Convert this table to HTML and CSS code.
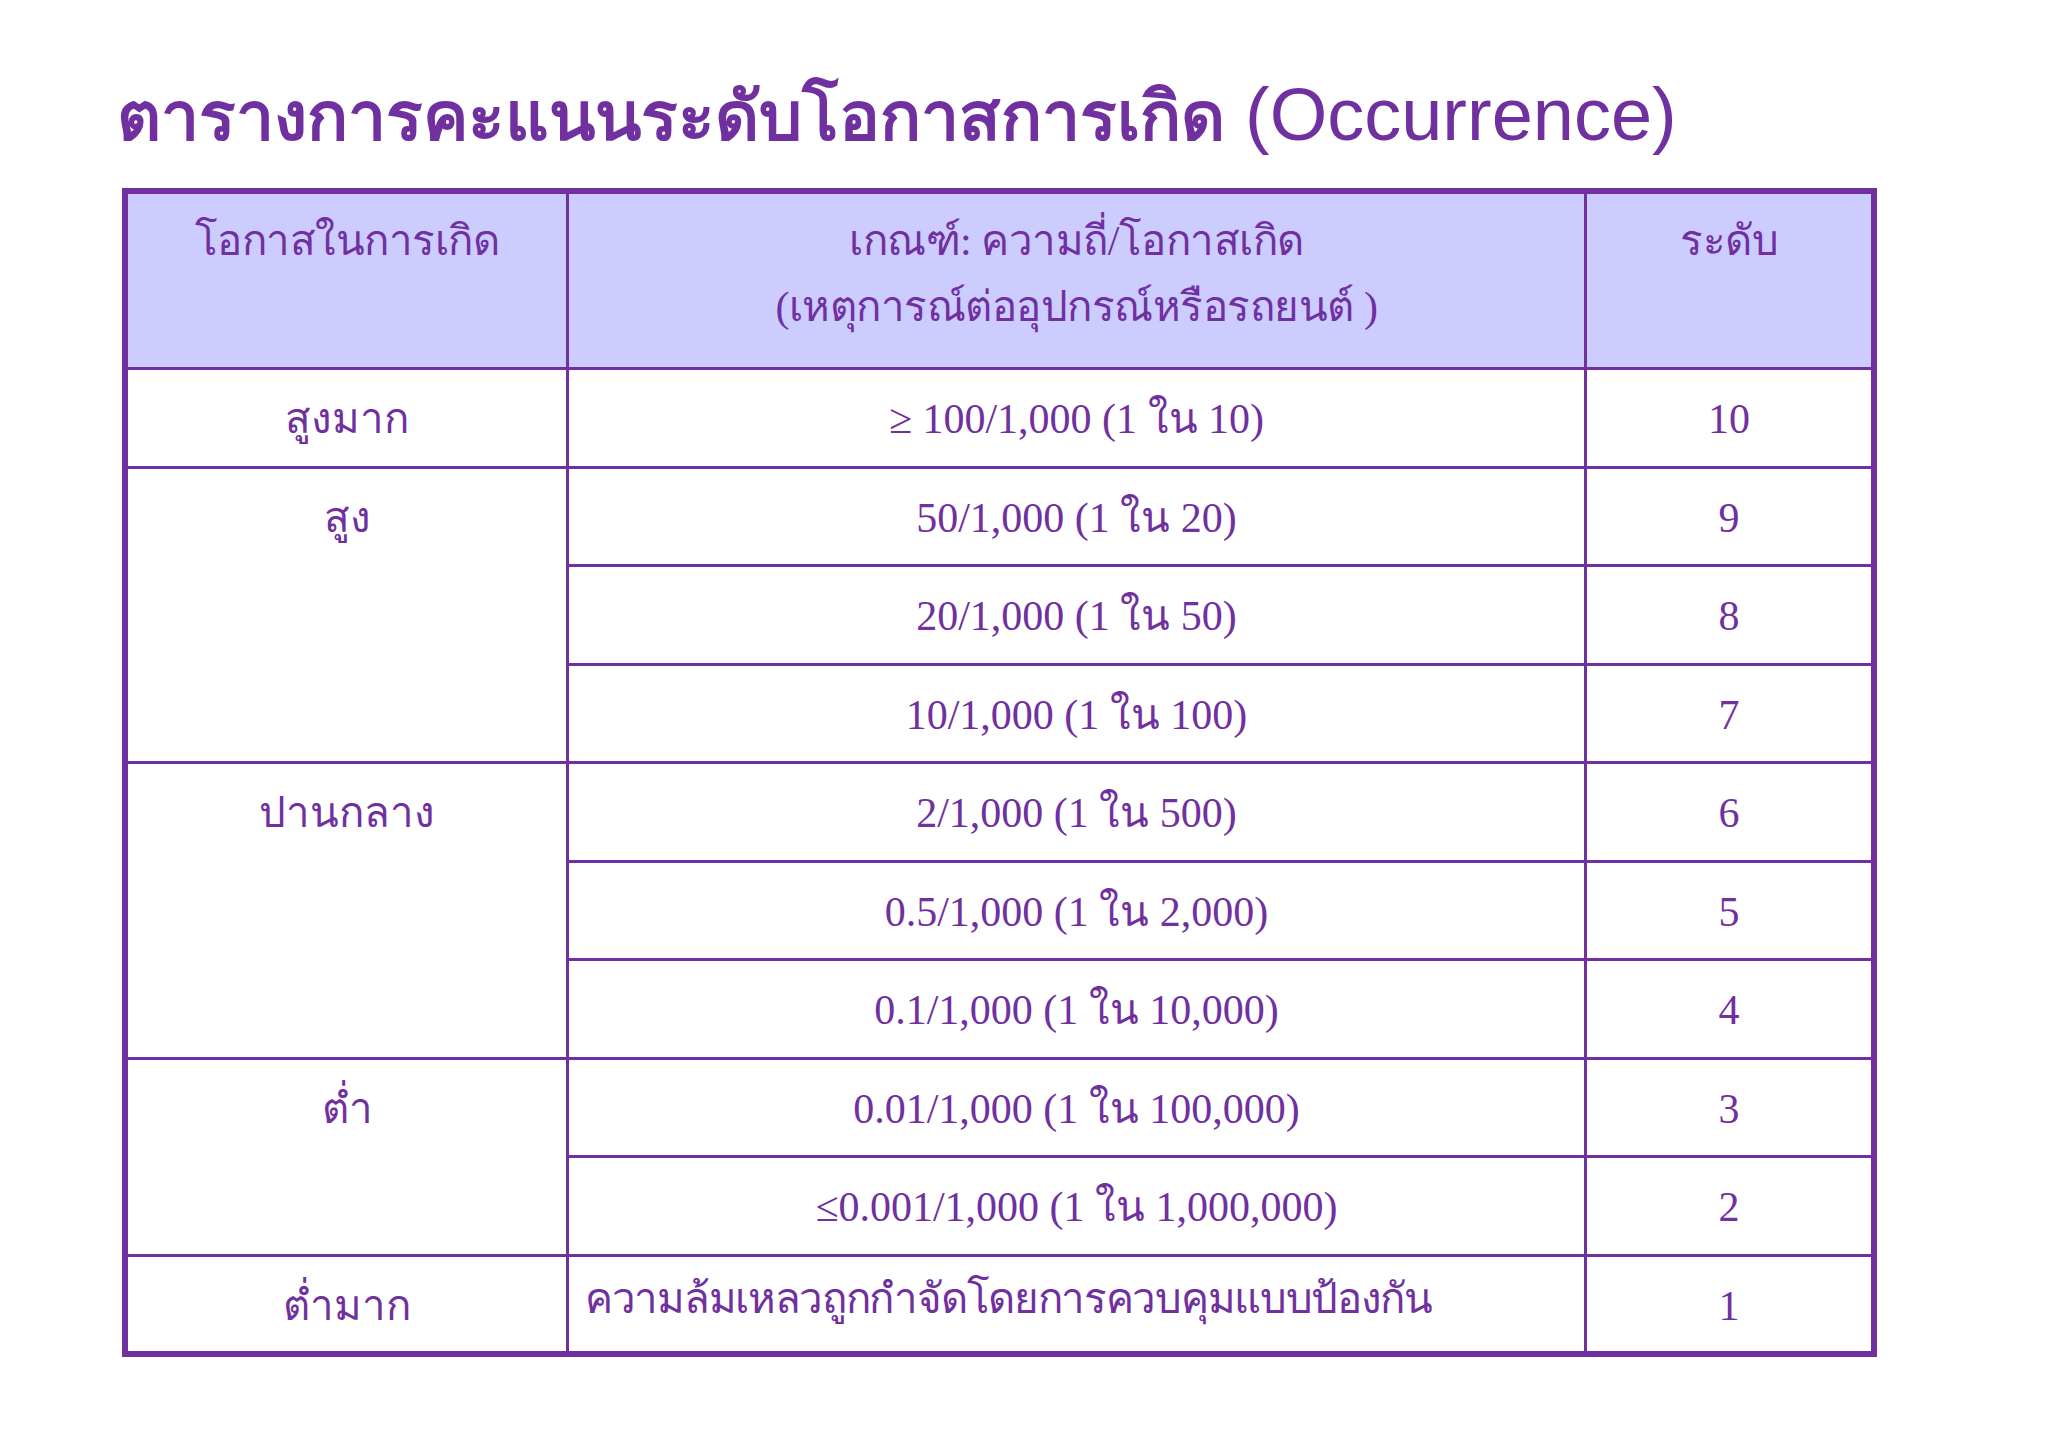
FILE: index.html
```html
<!DOCTYPE html>
<html lang="th">
<head>
<meta charset="utf-8">
<title>ตารางการคะแนนระดับโอกาสการเกิด (Occurrence)</title>
<link rel="stylesheet" href="styles.css">
</head>
<body>
<main class="slide">
  <h1 class="title"><span class="title-th">ตารางการคะแนนระดับโอกาสการเกิด</span> <span class="title-en">(Occurrence)</span></h1>
  <table class="grid">
    <colgroup>
      <col class="col-level">
      <col class="col-crit">
      <col class="col-num">
    </colgroup>
    <thead>
      <tr class="head">
        <th>โอกาสในการเกิด</th>
        <th>เกณฑ์: ความถี่/โอกาสเกิด<br>(เหตุการณ์ต่ออุปกรณ์หรือรถยนต์ )</th>
        <th>ระดับ</th>
      </tr>
    </thead>
    <tbody>
      <tr><td>สูงมาก</td><td>≥ 100/1,000 (1 ใน 10)</td><td>10</td></tr>
      <tr><td rowspan="3">สูง</td><td>50/1,000 (1 ใน 20)</td><td>9</td></tr>
      <tr><td>20/1,000 (1 ใน 50)</td><td>8</td></tr>
      <tr><td>10/1,000 (1 ใน 100)</td><td>7</td></tr>
      <tr><td rowspan="3">ปานกลาง</td><td>2/1,000 (1 ใน 500)</td><td>6</td></tr>
      <tr><td>0.5/1,000 (1 ใน 2,000)</td><td>5</td></tr>
      <tr><td>0.1/1,000 (1 ใน 10,000)</td><td>4</td></tr>
      <tr><td rowspan="2">ต่ำ</td><td>0.01/1,000 (1 ใน 100,000)</td><td>3</td></tr>
      <tr><td>≤0.001/1,000 (1 ใน 1,000,000)</td><td>2</td></tr>
      <tr class="last-row"><td>ต่ำมาก</td><td class="text-left">ความล้มเหลวถูกกำจัดโดยการควบคุมแบบป้องกัน</td><td>1</td></tr>
    </tbody>
  </table>
</main>
</body>
</html>
```

FILE: styles.css
```css
html, body {
  margin: 0;
  padding: 0;
  background: #ffffff;
}

.slide {
  width: 2048px;
  height: 1448px;
  padding: 79px 0 0 117px;
  box-sizing: border-box;
  color: #7030a0;
}

.title {
  margin: 0;
  font-family: "Liberation Sans", "DejaVu Sans", sans-serif;
  font-weight: normal;
  font-size: 72px;
  line-height: 72px;
  height: 109px;
  white-space: nowrap;
}

.title-th {
  font-size: 68px;
  font-weight: bold;
}

.title-en {
  font-size: 74px;
}

.grid {
  margin-left: 5px;
  width: 1755px;
  border: 6px solid #7030a0;
  border-collapse: separate;
  border-spacing: 0;
  table-layout: fixed;
  font-family: "Liberation Serif", "DejaVu Serif", serif;
  font-size: 42px;
  line-height: 72px;
  color: #7030a0;
}

.col-level { width: 441px; }
.col-crit { width: 1018px; }
.col-num { width: 284px; }

.grid th,
.grid td {
  box-sizing: border-box;
  border-right: 3px solid #7030a0;
  border-bottom: 3px solid #7030a0;
  padding: 13px 10px 0;
  text-align: center;
  vertical-align: top;
  font-weight: normal;
  white-space: nowrap;
}

.grid th:last-child,
.grid td:last-child {
  border-right: 0;
}

.head {
  height: 176px;
  background: #ccccff;
}

.head th {
  padding-top: 14px;
  line-height: 66px;
  letter-spacing: -0.5px;
}

.grid tbody tr {
  height: 98.5px;
}

.grid tbody tr.last-row {
  height: 94px;
}

.last-row td {
  border-bottom: 0;
}

.grid td.text-left {
  text-align: left;
  padding-left: 16px;
  padding-top: 6px;
  letter-spacing: -1.3px;
}
```
